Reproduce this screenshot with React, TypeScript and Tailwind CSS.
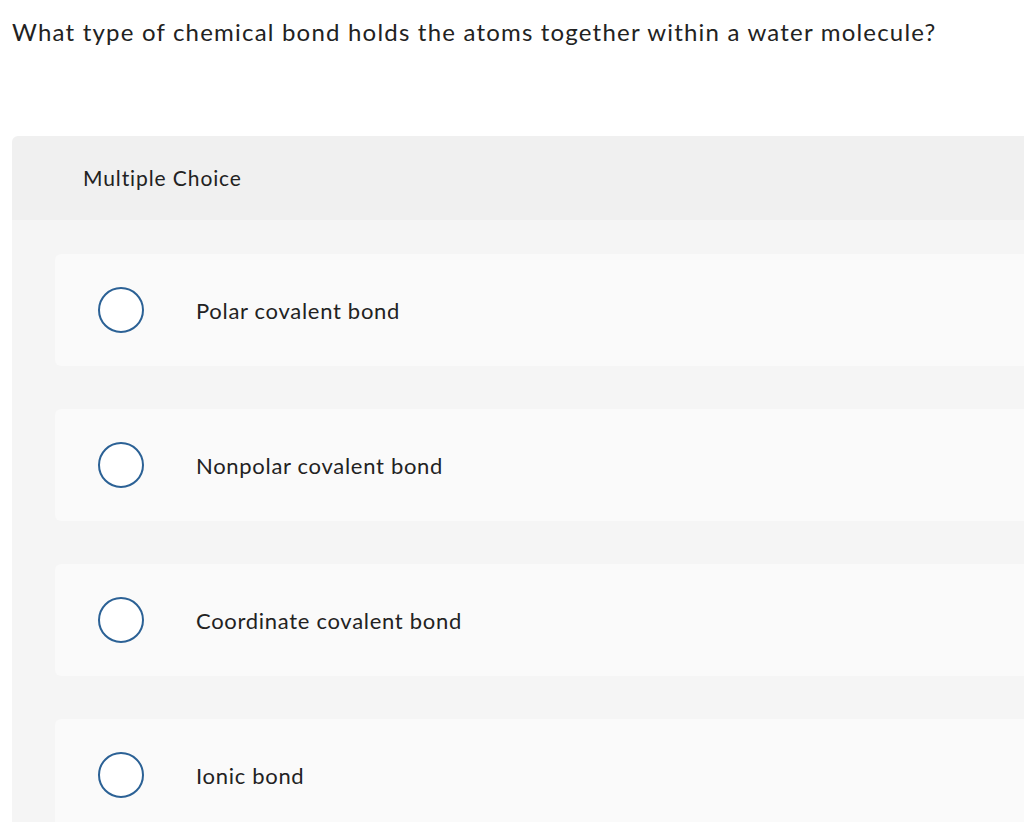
const options = [
  'Polar covalent bond',
  'Nonpolar covalent bond',
  'Coordinate covalent bond',
  'Ionic bond',
];

export default function App() {
  return (
    <div
      className="w-[1024px] h-[822px] overflow-hidden bg-white text-[#222]"
      style={{ fontFamily: 'Lato, "Open Sans", sans-serif' }}
    >
      <h1 className="pl-3 pt-[15px] text-[24px] leading-[34px] font-normal tracking-[1.2px]">
        What type of chemical bond holds the atoms together within a water molecule?
      </h1>

      <div className="ml-3 mt-[87px] w-[1100px] rounded-tl-md overflow-hidden">
        <div className="h-[84px] bg-[#f0f0f0] pl-[71px] flex items-center text-[21px] tracking-[0.9px]">
          Multiple Choice
        </div>
        <div className="bg-[#f5f5f5] pl-[43px] pt-[34px] flex flex-col gap-[43px]">
          {options.map((o) => (
            <div
              key={o}
              className="h-[112px] bg-[#fafafa] rounded-md pl-[43px] flex items-center gap-[52px] text-[22px] tracking-[0.7px]"
            >
              <span className="w-[46px] h-[46px] rounded-full border-2 border-[#2b6195] bg-white shrink-0" />
              <span>{o}</span>
            </div>
          ))}
        </div>
      </div>
    </div>
  );
}
